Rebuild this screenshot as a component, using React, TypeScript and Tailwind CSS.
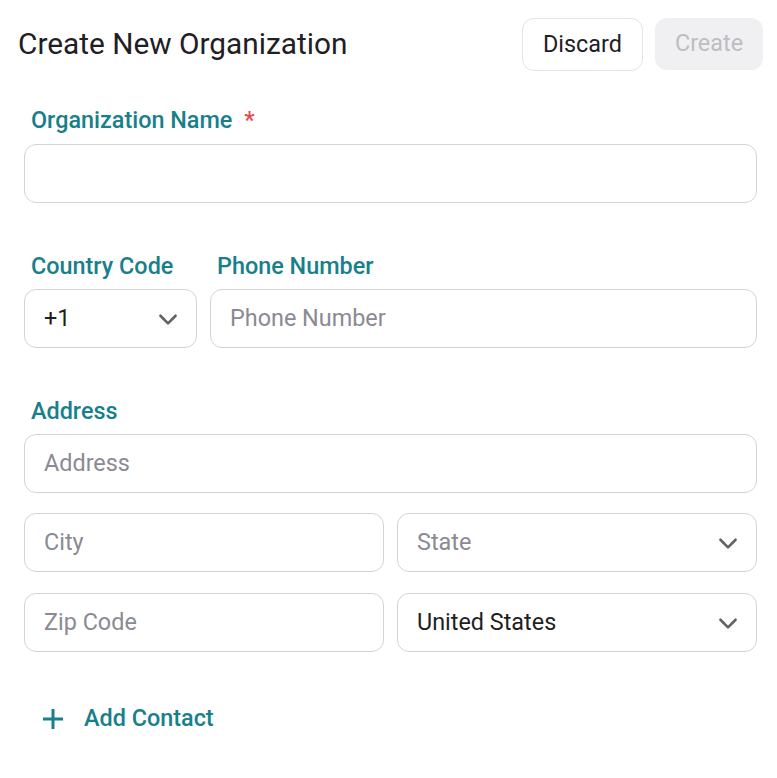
import React from "react";

function Chevron() {
  return (
    <svg width="26" height="26" viewBox="0 0 24 24" fill="none" stroke="#5f6368" strokeWidth="2.4" strokeLinecap="round" strokeLinejoin="round">
      <path d="M5 9l7 7 7-7" />
    </svg>
  );
}

function Label({ children, required }: { children: React.ReactNode; required?: boolean }) {
  return (
    <div className="pl-[7px] text-[23.4px] leading-[28px] font-medium text-[#17808a]">
      {children}
      {required && <span className="ml-3 text-[#e5484d]">*</span>}
    </div>
  );
}

function Field({ placeholder, className = "" }: { placeholder?: string; className?: string }) {
  return (
    <div className={`h-[59px] rounded-xl border border-[#d4d4d8] bg-white flex items-center px-[19px] ${className}`}>
      {placeholder && <span className="text-[23.4px] text-[#8a8a93]">{placeholder}</span>}
    </div>
  );
}

function Select({ value, placeholder, className = "" }: { value?: string; placeholder?: string; className?: string }) {
  return (
    <div className={`h-[59px] rounded-xl border border-[#d4d4d8] bg-white flex items-center justify-between pl-[19px] pr-[15px] ${className}`}>
      {value ? (
        <span className="text-[23.4px] text-[#1f1f23]">{value}</span>
      ) : (
        <span className="text-[23.4px] text-[#8a8a93]">{placeholder}</span>
      )}
      <Chevron />
    </div>
  );
}

export default function App() {
  return (
    <div className="w-[777px] h-[778px] bg-white" style={{ fontFamily: "Roboto, 'Noto Sans', sans-serif" }}>
      <div className="flex items-center justify-between pl-[18px] pr-[14px] pt-[18px]">
        <h1 className="text-[29.8px] text-[#1f2024] font-normal">Create New Organization</h1>
        <div className="flex gap-3">
          <button className="h-[53px] w-[121px] rounded-xl border border-[#e4e4e7] bg-white text-[23.4px] text-[#1f2024]">Discard</button>
          <button className="h-[52px] w-[108px] rounded-xl bg-[#f0f0f2] text-[23.4px] text-[#bdbdc2]">Create</button>
        </div>
      </div>

      <div className="pl-[24px] pr-[20px]">
        <div className="mt-[35px]">
          <Label required>Organization Name</Label>
          <Field className="mt-[10px]" />
        </div>

        <div className="mt-[49px] flex gap-[13px]">
          <div className="w-[173px]">
            <Label>Country Code</Label>
            <Select value="+1" className="mt-[9px]" />
          </div>
          <div className="flex-1">
            <Label>Phone Number</Label>
            <Field placeholder="Phone Number" className="mt-[9px]" />
          </div>
        </div>

        <div className="mt-[49px]">
          <Label>Address</Label>
          <Field placeholder="Address" className="mt-[9px]" />
          <div className="mt-[20px] grid grid-cols-2 gap-x-[13px] gap-y-[21px]">
            <Field placeholder="City" />
            <Select placeholder="State" />
            <Field placeholder="Zip Code" />
            <Select value="United States" />
          </div>
        </div>

        <button className="mt-[49px] ml-[18px] flex items-center gap-[20px] text-[#17808a]">
          <svg width="22" height="22" viewBox="0 0 22 22" stroke="currentColor" strokeWidth="3">
            <path d="M11 1v20M1 11h20" />
          </svg>
          <span className="text-[23.4px] font-medium">Add Contact</span>
        </button>
      </div>
    </div>
  );
}
